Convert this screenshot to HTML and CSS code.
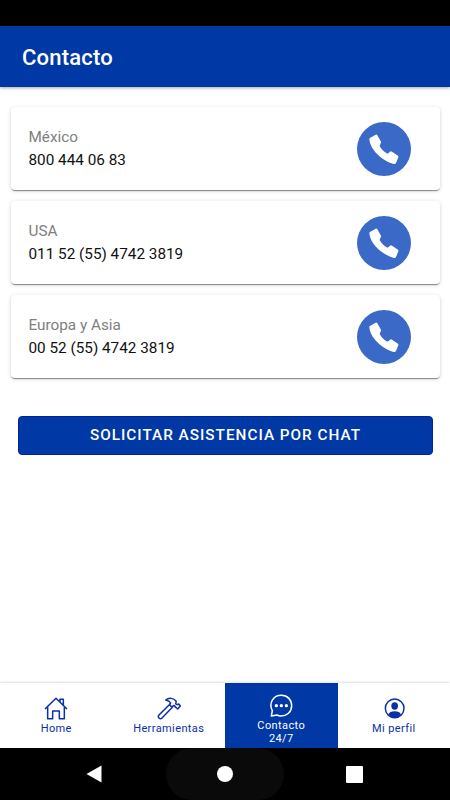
FILE: index.html
```html
<!DOCTYPE html>
<html lang="es">
<head>
    <meta charset="UTF-8">
    <meta name="viewport" content="width=device-width, initial-scale=1.0">
    <title>Contacto</title>
    <link rel="stylesheet" href="styles.css">
</head>
<body>
    <svg width="0" height="0" class="sprite">
        <symbol id="phone" viewBox="0 0 162 162">
            <path d="M37 51 Q37 48 40 47 L56 38 Q59 37 61 40 L72 59 Q73 62 71 64 L68 72 Q75 87 92 95 L99 89 Q102 87 105 89 L123 101 Q125 103 124 106 L117 123 Q115 127 110 126 C76 116 39 84 37 51Z" fill="#fff"/>
        </symbol>
    </svg>

    <div class="status-bar"></div>
    <header class="header">
        <h1>Contacto</h1>
    </header>

    <main class="content">
        <div class="card">
            <div class="card-text">
                <p class="country">México</p>
                <p class="number">800 444 06 83</p>
            </div>
            <a class="call-button" href="#"><svg><use href="#phone"/></svg></a>
        </div>
        <div class="card">
            <div class="card-text">
                <p class="country">USA</p>
                <p class="number">011 52 (55) 4742 3819</p>
            </div>
            <a class="call-button" href="#"><svg><use href="#phone"/></svg></a>
        </div>
        <div class="card">
            <div class="card-text">
                <p class="country">Europa y Asia</p>
                <p class="number">00 52 (55) 4742 3819</p>
            </div>
            <a class="call-button" href="#"><svg><use href="#phone"/></svg></a>
        </div>
        <button class="chat-button">Solicitar asistencia por chat</button>
    </main>

    <nav class="tabs">
        <a class="tab" href="#">
            <svg viewBox="0 0 72 72">
                <path d="M3 36 L36 4 L69 36 M11 30 V65 H26 V42 H46 V65 H61 V30 M48 14 V7 H58 V25"/>
            </svg>
            <span>Home</span>
        </a>
        <a class="tab" href="#">
            <svg viewBox="0 0 72 72">
                <path d="M26 9 C36 1 50 3 57 12 Q58 17 56 20 Q60 24 65 21 L70 27 L62 36 L54 29 Q54 24 49 26 L46 31 L37 23 L41 18 Q37 11 26 9Z M37 23 L6 54 Q2 59 6 63 Q10 68 15 63 L46 31"/>
            </svg>
            <span>Herramientas</span>
        </a>
        <a class="tab active" href="#">
            <svg viewBox="0 0 72 72">
                <path d="M7 66 L10 50 C-2 27 13 4 37 4 C56 4 68 18 68 35 C68 54 53 66 36 66 Q29 66 24 63Z"/>
                <g class="solid">
                    <circle cx="22" cy="35" r="5"/>
                    <circle cx="37" cy="35" r="5"/>
                    <circle cx="52" cy="35" r="5"/>
                </g>
            </svg>
            <span>Contacto<br>24/7</span>
        </a>
        <a class="tab" href="#">
            <svg viewBox="0 0 72 72">
                <circle cx="38" cy="34" r="28"/>
                <g class="solid">
                    <ellipse cx="38" cy="27" rx="10" ry="11"/>
                    <path d="M19 53 Q23 43 38 43 Q53 43 57 53 Q49 62 38 62 Q27 62 19 53Z"/>
                </g>
            </svg>
            <span>Mi perfil</span>
        </a>
    </nav>

    <div class="system-nav">
        <svg class="back" viewBox="0 0 16 18"><path d="M0.5 9 L15.5 0.5 V17.5Z"/></svg>
        <div class="home-pill"><div class="home-dot"></div></div>
        <div class="recent"></div>
    </div>
</body>
</html>
```
FILE: styles.css
```css
* {
    box-sizing: border-box;
}
body {
    margin: 0;
    height: 800px;
    display: flex;
    flex-direction: column;
    overflow: hidden;
    background: #fff;
    font-family: Roboto, "Liberation Sans", sans-serif;
}
.sprite {
    display: none;
}
.status-bar {
    height: 26px;
    background: #000;
}
.header {
    height: 61px;
    display: flex;
    align-items: center;
    padding: 2px 22px 0;
    background: #0038a5;
    box-shadow: 0 1px 3px rgba(0,0,0,0.35);
}
.header h1 {
    margin: 0;
    color: #fff;
    font-size: 22px;
    font-weight: 500;
    letter-spacing: 0.2px;
}
.content {
    flex: 1;
    display: flex;
    flex-direction: column;
    gap: 11px;
    padding: 20px 10px 0 11px;
}
.card {
    height: 83px;
    display: flex;
    align-items: center;
    justify-content: space-between;
    padding: 0 29px 0 17.5px;
    border-radius: 4px;
    background: #fff;
    box-shadow: 0 2px 1px -1px rgba(0,0,0,0.3), 0 1px 1px rgba(0,0,0,0.16), 0 1px 4px rgba(0,0,0,0.16);
}
.card-text {
    padding-top: 1px;
}
.card p {
    margin: 0;
    font-size: 15.3px;
    line-height: 23px;
}
.card .country {
    color: #808080;
}
.card .number {
    color: #111;
}
.call-button {
    width: 54px;
    height: 54px;
    border-radius: 50%;
    background: #3a69c7;
}
.call-button svg {
    display: block;
    width: 54px;
    height: 54px;
}
.chat-button {
    height: 39px;
    margin: 27px 7px 0;
    padding: 0 0 2px;
    border: 1px solid #0023a0;
    border-radius: 4px;
    background: #0038a5;
    color: #fff;
    font: 500 15.3px Roboto, "Liberation Sans", sans-serif;
    letter-spacing: 1px;
    text-transform: uppercase;
}
.tabs {
    height: 65px;
    display: grid;
    grid-template-columns: repeat(4, 1fr);
    box-shadow: 0 -1px 2px rgba(0,0,0,0.12);
}
.tab {
    display: flex;
    flex-direction: column;
    align-items: center;
    justify-content: center;
    gap: 1px;
    padding-top: 1px;
    color: #0b2fa5;
    font-size: 11px;
    line-height: 13px;
    letter-spacing: 0.4px;
    text-align: center;
    text-decoration: none;
}
.tab.active {
    padding-top: 7px;
    background: #0038a5;
    color: #fff;
}
.tab svg {
    width: 24px;
    height: 24px;
    fill: none;
    stroke: currentColor;
    stroke-width: 4.5;
    stroke-linejoin: round;
}
.tab .solid {
    fill: currentColor;
    stroke: none;
}
.system-nav {
    height: 52px;
    display: grid;
    grid-template-columns: 166px 118px 1fr;
    align-items: center;
    background: #000;
}
.back {
    width: 16px;
    height: 18px;
    margin-left: 86px;
    fill: #fff;
}
.home-pill {
    height: 52px;
    display: flex;
    align-items: center;
    justify-content: center;
    border-radius: 26px;
    background: #0a0a0a;
}
.home-dot {
    width: 16px;
    height: 16px;
    border-radius: 50%;
    background: #fff;
}
.recent {
    width: 17px;
    height: 17px;
    margin-left: 62px;
    border-radius: 1px;
    background: #fff;
}
```
